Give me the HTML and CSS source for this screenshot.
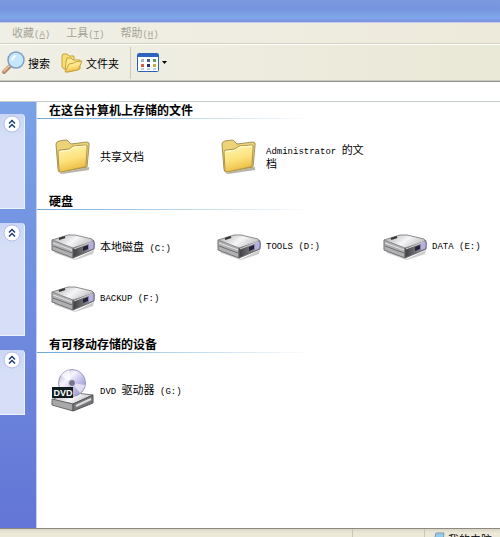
FILE: index.html
```html
<!DOCTYPE html>
<html lang="zh-CN">
<head>
    <meta charset="UTF-8">
    <title>我的电脑</title>
    <link rel="stylesheet" href="styles.css">
</head>
<body>
<!-- 公用图标 -->
<svg class="defs" aria-hidden="true">
    <defs>
        <linearGradient id="gold" x1="0" y1="0" x2="0.3" y2="1">
            <stop offset="0" stop-color="#fff6b4"/>
            <stop offset="0.6" stop-color="#fce27c"/>
            <stop offset="1" stop-color="#edbd44"/>
        </linearGradient>
        <linearGradient id="diskTop" x1="0" y1="0" x2="1" y2="0.4">
            <stop offset="0" stop-color="#a9a9ab"/>
            <stop offset="0.6" stop-color="#f6f6f8"/>
            <stop offset="1" stop-color="#c6c6ca"/>
        </linearGradient>
        <linearGradient id="diskFront" x1="0" y1="0" x2="1" y2="0">
            <stop offset="0" stop-color="#3e3e40"/>
            <stop offset="0.6" stop-color="#7b7b80"/>
            <stop offset="1" stop-color="#a9a4d4"/>
        </linearGradient>
        <linearGradient id="cd" x1="0" y1="0" x2="1" y2="1">
            <stop offset="0" stop-color="#a9a6d8"/>
            <stop offset="0.35" stop-color="#f6f4ff"/>
            <stop offset="0.6" stop-color="#c3bfea"/>
            <stop offset="1" stop-color="#8f8cc4"/>
        </linearGradient>
        <symbol id="folder" viewBox="0 0 36 36">
            <path d="M4 35 L34 29 L35 8 L34 32 L7 36 Z" fill="#8b8468" opacity="0.6"/>
            <path d="M1 6 Q1 4 4 3 L11 2 Q13 2 14 4 L16 6 L32 4 Q35 4 34 8 L32 29 L5 34 Q3 34 3 31 Z" fill="#ecd377" stroke="#a2935a"/>
            <path d="M3 14 Q3 12 5 12 L14 11 L18 8 L31 7 Q33 7 32 10 L31 27 Q31 29 29 29 L6 34 Q4 34 4 32 Z" fill="url(#gold)" stroke="#b1954a"/>
            <path d="M4 14 L15 12 L19 9 L31 8" fill="none" stroke="#fffbd6"/>
        </symbol>
        <symbol id="disk" viewBox="0 0 44 26">
            <path d="M3 17 L24 25 L43 16 L42 20 L24 26 L4 19 Z" fill="#9a9a9a" opacity="0.5"/>
            <path d="M1 6 L22 13 L22 24 L1 16 Z" fill="#b0b0b2" stroke="#707072"/>
            <path d="M22 13 L42 6 Q44 7 43 15 L22 24 Z" fill="url(#diskFront)" stroke="#66666c"/>
            <path d="M1 6 L17 1 L24 1 L41 5 Q43 6 40 8 L22 14 Z" fill="url(#diskTop)" stroke="#8c8c8e"/>
            <path d="M2 9 L21 16" stroke="#e2e2e2"/>
            <path d="M2 12 L21 19" stroke="#6e6e70"/>
            <path d="M23 15 L41 8" stroke="#d4d4d8"/>
            <path d="M8 5 L14 3" stroke="#333" stroke-width="2"/>
            <path d="M32 13 L37 11 V15 L32 17 Z" fill="#22223a"/>
            <path d="M38 9 L42 8 V14 L38 16 Z" fill="#b5afe0"/>
        </symbol>
        <symbol id="chevron" viewBox="0 0 18 18">
            <circle cx="9" cy="9" r="8" fill="#fff" stroke="#b4bfe4"/>
            <path d="M6 8.500 L9 5.500 L12 8.500 M6 12.500 L9 9.500 L12 12.500" fill="none" stroke="#1d3f70" stroke-width="1.500"/>
        </symbol>
    </defs>
</svg>

<div class="window">
    <div class="titlebar"></div>

    <div class="menubar">
        <button type="button">收藏<span class="en">(<u>A</u>)</span></button>
        <button type="button">工具<span class="en">(<u>T</u>)</span></button>
        <button type="button">帮助<span class="en">(<u>H</u>)</span></button>
    </div>

    <div class="toolbar">
        <button type="button">
            <svg width="24" height="24" viewBox="0 0 24 24">
                <path d="M10 14 L3 21" stroke="#b98a68" stroke-width="4" stroke-linecap="round"/>
                <path d="M9 14 L3 20" stroke="#ecc9a8" stroke-width="1.500" stroke-linecap="round"/>
                <circle cx="15" cy="9" r="8" fill="#c5e6fb" stroke="#7f9fc0" stroke-width="1.500"/>
                <path d="M10 9 Q11 4 16 4 Q13 6 12 10 Z" fill="#fff"/>
            </svg>
            搜索
        </button>
        <button type="button" class="folders">
            <svg width="22" height="20" viewBox="0 0 22 20">
                <path d="M1 3 L2 1 H6 L8 3 H13 V12 L3 16 L1 14 Z" fill="#f6df72" stroke="#c9a23c"/>
                <path d="M5 9 L6 5 H10 L12 7 H19 V16 L7 19 L4 17 Z" fill="#fbe98e" stroke="#c9a23c"/>
                <path d="M4 19 L8 11 L13 10 L14 9 L21 8 L17 17 L6 19 Z" fill="url(#gold)" stroke="#c9a23c"/>
            </svg>
            文件夹
        </button>
        <span class="line"></span>
        <button type="button" class="views" aria-label="查看">
            <svg width="22" height="19" viewBox="0 0 22 19">
                <rect x="0.500" y="0.500" width="21" height="18" rx="1" fill="#fff" stroke="#2e62b4"/>
                <rect x="1" y="1" width="20" height="3" fill="#2c63c0"/>
                <rect x="4" y="6" width="3" height="3" fill="#a9b4c4"/>
                <rect x="10" y="6" width="3" height="3" fill="#41609c"/>
                <rect x="16" y="6" width="3" height="3" fill="#59a060"/>
                <rect x="4" y="11" width="3" height="3" fill="#d06048"/>
                <rect x="10" y="11" width="3" height="3" fill="#20366c"/>
                <rect x="16" y="11" width="3" height="3" fill="#c3ac40"/>
                <path d="M4 16 H7 M10 16 H13 M16 16 H19" stroke="#7c9cd0"/>
            </svg>
            <svg width="5" height="3" viewBox="0 0 5 3"><path d="M0 0 H5 L2.500 3 Z" fill="#000"/></svg>
        </button>
    </div>

    <div class="address"></div>

    <div class="content">
        <div class="sidebar">
            <div class="panel system"><button type="button" aria-label="折叠"><svg width="18" height="18"><use href="#chevron"/></svg></button></div>
            <div class="panel places"><button type="button" aria-label="折叠"><svg width="18" height="18"><use href="#chevron"/></svg></button></div>
            <div class="panel details"><button type="button" aria-label="折叠"><svg width="18" height="18"><use href="#chevron"/></svg></button></div>
        </div>

        <div class="files">
            <h2>在这台计算机上存储的文件</h2>
            <ul>
                <li><svg class="icon" width="36" height="36"><use href="#folder"/></svg><span>共享文档</span></li>
                <li><svg class="icon" width="36" height="36"><use href="#folder"/></svg><span><span class="en">Administrator </span>的文档</span></li>
            </ul>
            <h2>硬盘</h2>
            <ul>
                <li><svg class="icon" width="44" height="26"><use href="#disk"/></svg><span>本地磁盘<span class="en"> (C:)</span></span></li>
                <li><svg class="icon" width="44" height="26"><use href="#disk"/></svg><span class="en">TOOLS (D:)</span></li>
                <li><svg class="icon" width="44" height="26"><use href="#disk"/></svg><span class="en">DATA (E:)</span></li>
                <li><svg class="icon" width="44" height="26"><use href="#disk"/></svg><span class="en">BACKUP (F:)</span></li>
            </ul>
            <h2>有可移动存储的设备</h2>
            <ul>
                <li>
                    <svg class="icon" width="44" height="44" viewBox="0 0 44 44">
                        <path d="M1 32 L16 24 L42 27 L22 36 Z" fill="url(#diskTop)" stroke="#777"/>
                        <path d="M1 31 L22 36 V43 L1 37 Z" fill="#a8a8aa" stroke="#666"/>
                        <path d="M22 36 L42 27 V35 L22 43 Z" fill="#77777b" stroke="#555"/>
                        <path d="M25 38 L40 31" stroke="#ddd" stroke-width="2"/>
                        <circle cx="21" cy="15" r="13.500" fill="url(#cd)" stroke="#9a98ba"/>
                        <path d="M21 15 L10 8 A13 13 0 0 1 18 2 Z" fill="#fff" opacity="0.7"/>
                        <path d="M21 15 L34 17 A13 13 0 0 1 29 25 Z" fill="#fff" opacity="0.6"/>
                        <circle cx="21" cy="15" r="3.500" fill="#77758c" stroke="#dedcf0"/>
                        <rect x="1" y="19" width="21" height="11" fill="#101c20"/>
                        <text class="dvd" x="12" y="28" text-anchor="middle">DVD</text>
                    </svg>
                    <span><span class="en">DVD </span>驱动器<span class="en"> (G:)</span></span>
                </li>
            </ul>
        </div>
    </div>

    <div class="status">
        <div class="cell"></div>
        <div class="cell objects"></div>
        <div class="cell zone">
            <svg width="14" height="14" viewBox="0 0 14 14">
                <path d="M4 1 H12 L11 9 H2 Z" fill="#8fcdf0" stroke="#8796ac"/>
                <path d="M1 11 H11 V13 H1 Z" fill="#d8d8d0" stroke="#8a8a80"/>
            </svg>
            我的电脑
        </div>
    </div>
</div>
</body>
</html>
```

FILE: styles.css
```css
*{
    margin: 0;
    padding: 0;
    box-sizing: border-box;
}
body{
    height: 100vh;
    overflow: hidden;
    font: 11px/12px "Noto Sans CJK SC", sans-serif;
    color: #000;
}
button{
    border: 0;
    background: none;
    font: inherit;
    color: inherit;
}
.defs{
    position: absolute;
    width: 0;
    height: 0;
}
/* 状态栏下半部分超出可视区域 */
.window{
    display: flex;
    flex-direction: column;
    height: calc(100vh + 12px);
}
.en{
    font-family: "Liberation Mono", monospace;
    font-size: 9px;
    line-height: 9px;
    white-space: pre-wrap;
}
.titlebar{
    height: 23px;
    background: linear-gradient(#7b9ae0, #7694de 40%, #7ea8ea 80%, #7d8fdc);
    border-bottom: 1px solid #c4cdec;
}
.menubar{
    display: flex;
    gap: 16px;
    height: 21px;
    padding-left: 12px;
    background: linear-gradient(90deg, #f0efe6, #edeadb);
    border-bottom: 1px solid #d5d2c2;
    color: #a5a396;
}
.toolbar{
    display: flex;
    align-items: center;
    height: 37px;
    padding-left: 1px;
    background: linear-gradient(90deg, #f0efe6, #eae8d6);
    border-top: 1px solid #fff;
    border-bottom: 1px solid #cdcabf;
}
.toolbar button{
    display: flex;
    align-items: center;
    gap: 3px;
}
.toolbar .folders{
    margin-left: 11px;
}
.line{
    width: 1px;
    height: 32px;
    margin: 0 6px 0 11px;
    background-color: #cfccbd;
}
.address{
    height: 21px;
    background-color: #fff;
    border-top: 1px solid #8f8f94;
    border-bottom: 1px solid #c3cccd;
}
.content{
    display: flex;
    flex: 1;
    min-height: 0;
    overflow: hidden;
    background-color: #fff;
}
.sidebar{
    display: flex;
    flex-direction: column;
    gap: 14px;
    width: 37px;
    padding: 12px 11px 0 0;
    background: linear-gradient(#7ba2e7, #6375d6);
    border-right: 1px solid #c3d2f3;
}
.panel{
    padding: 1px 0 0 3px;
    background: linear-gradient(#c9d6f6, #d6dff7 24px);
    border: 1px solid #eef2fd;
    border-width: 0 1px 1px 0;
    border-top-right-radius: 4px;
}
.panel svg{
    display: block;
}
.system{
    height: 95px;
}
.places{
    height: 113px;
}
.details{
    height: 65px;
}
.files{
    flex: 1;
    min-width: 0;
}
.files h2{
    height: 17px;
    padding-left: 12px;
    font-size: 12px;
    line-height: 16px;
    background: linear-gradient(90deg, #70a8d8, #fff) left bottom / 275px 1px no-repeat;
}
.files ul{
    display: grid;
    grid-template-columns: repeat(3, 166px);
    grid-auto-rows: 52px;
    padding: 11px 0 11px 14px;
    list-style: none;
}
.files li{
    display: flex;
    align-items: center;
    gap: 5px;
    padding-right: 16px;
}
.icon{
    flex: none;
    width: 44px;
}
.dvd{
    font: bold 9px "Liberation Sans", sans-serif;
    fill: #fff;
}
.status{
    display: flex;
    height: 21px;
    background: linear-gradient(#d9d6c6, #ece9d8 4px);
    border-top: 1px solid #8c8a80;
}
.cell{
    flex: 1;
    border-right: 1px solid #c9c6b6;
}
.objects{
    flex: none;
    width: 72px;
}
.zone{
    display: flex;
    align-items: center;
    flex: none;
    gap: 2px;
    width: 75px;
    padding-left: 7px;
    border-right: 0;
}
```
